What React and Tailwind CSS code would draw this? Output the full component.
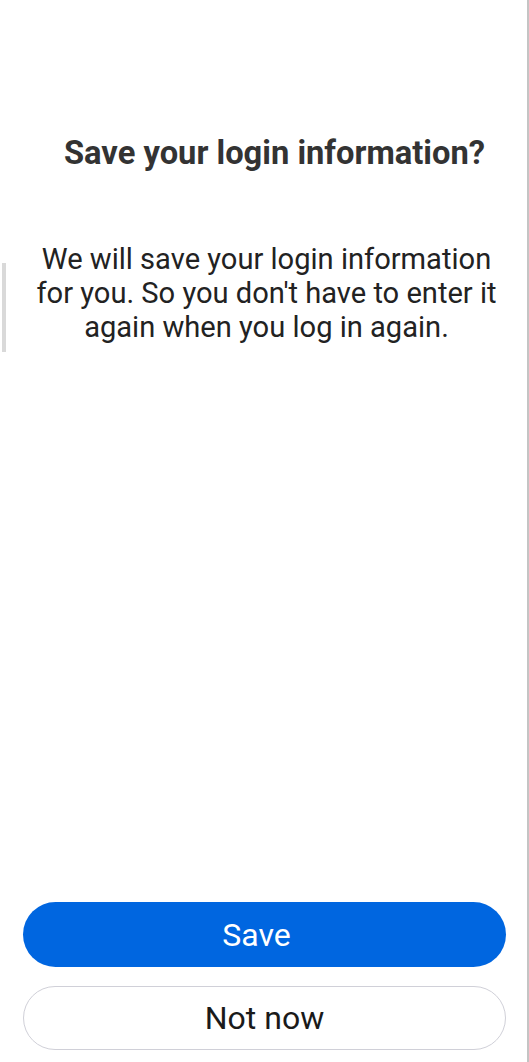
export default function App() {
  return (
    <div className="relative w-[529px] h-[1062px] bg-white overflow-hidden flex flex-col" style={{ fontFamily: "Roboto, 'Noto Sans', sans-serif" }}>
      <div className="absolute right-0 top-0 w-[2px] h-full bg-[#c4c4c4]" />
      <div className="absolute left-[2px] top-[263px] w-[4px] h-[89px] bg-[#d9d9d9]" />
      <div className="pt-[133px] pl-[20px] text-center">
        <h1 className="text-[32.7px] leading-[40px] font-bold text-[#333333]">Save your login information?</h1>
      </div>
      <div className="pt-[69px] pl-[30px] pr-[26px] text-center">
        <p className="text-[29.1px] leading-[34px] text-[#222222]">
          We will save your login information for you. So you don't have to enter it again when you log in again.
        </p>
      </div>
      <div className="flex-1" />
      <div className="flex flex-col gap-[19px] px-[23px] pb-[12px] pr-[23px]">
        <button className="h-[65px] w-[483px] rounded-full bg-[#0066e0] text-white text-[32px] pr-[16px]">Save</button>
        <button className="h-[64px] w-[483px] rounded-full border border-[#d0d0d8] bg-white text-[#1a1a1a] text-[32px]">Not now</button>
      </div>
    </div>
  );
}
